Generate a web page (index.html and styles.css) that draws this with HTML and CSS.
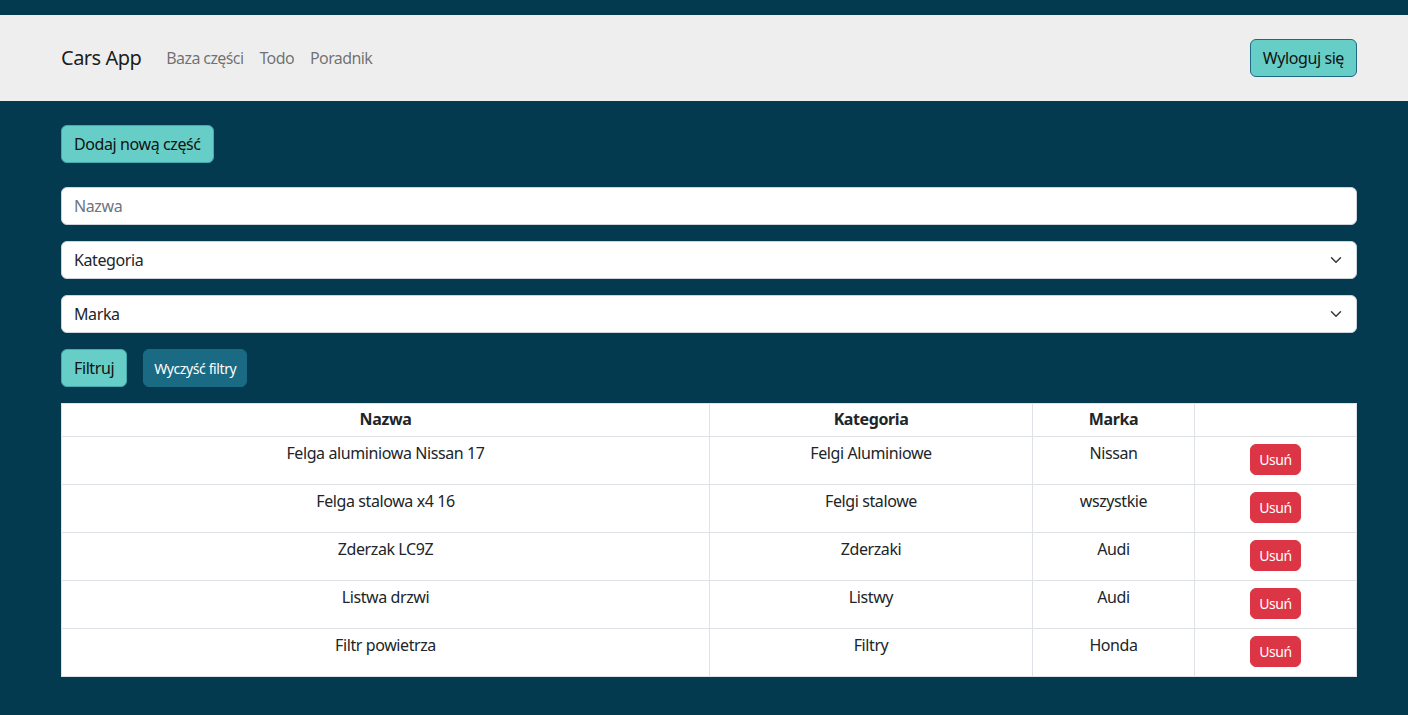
FILE: index.html
```html
<!DOCTYPE html>
<html lang="pl">
<head>
<meta charset="utf-8">
<title>Cars App</title>
<link rel="stylesheet" href="styles.css">
</head>
<body>
<div class="topband"></div>
<nav class="navbar">
  <div class="container nav-inner">
    <a class="brand" href="#">Cars App</a>
    <ul class="nav-links">
      <li><a href="#">Baza części</a></li>
      <li><a href="#">Todo</a></li>
      <li><a href="#">Poradnik</a></li>
    </ul>
    <button class="btn btn-teal btn-logout">Wyloguj się</button>
  </div>
</nav>
<main class="container main">
  <div class="row-add"><button class="btn btn-teal">Dodaj nową część</button></div>
  <input class="field" type="text" placeholder="Nazwa">
  <div class="select field"><span>Kategoria</span>
    <svg class="chev" width="12" height="12" viewBox="0 0 16 16"><path d="M2 5l6 6 6-6" fill="none" stroke="#343a40" stroke-width="2" stroke-linecap="round" stroke-linejoin="round"/></svg>
  </div>
  <div class="select field"><span>Marka</span>
    <svg class="chev" width="12" height="12" viewBox="0 0 16 16"><path d="M2 5l6 6 6-6" fill="none" stroke="#343a40" stroke-width="2" stroke-linecap="round" stroke-linejoin="round"/></svg>
  </div>
  <div class="filter-buttons">
    <button class="btn btn-teal">Filtruj</button>
    <button class="btn btn-dark-teal">Wyczyść filtry</button>
  </div>
  <table class="parts">
    <colgroup>
      <col style="width:648px"><col style="width:323px"><col style="width:162px"><col style="width:162px">
    </colgroup>
    <thead>
      <tr><th>Nazwa</th><th>Kategoria</th><th>Marka</th><th></th></tr>
    </thead>
    <tbody>
      <tr><td>Felga aluminiowa Nissan 17</td><td>Felgi Aluminiowe</td><td>Nissan</td><td><button class="btn btn-red">Usuń</button></td></tr>
      <tr><td>Felga stalowa x4 16</td><td>Felgi stalowe</td><td>wszystkie</td><td><button class="btn btn-red">Usuń</button></td></tr>
      <tr><td>Zderzak LC9Z</td><td>Zderzaki</td><td>Audi</td><td><button class="btn btn-red">Usuń</button></td></tr>
      <tr><td>Listwa drzwi</td><td>Listwy</td><td>Audi</td><td><button class="btn btn-red">Usuń</button></td></tr>
      <tr><td>Filtr powietrza</td><td>Filtry</td><td>Honda</td><td><button class="btn btn-red">Usuń</button></td></tr>
    </tbody>
  </table>
</main>
</body>
</html>
```
FILE: styles.css
```css
* { box-sizing: border-box; }
html, body { margin: 0; padding: 0; }
body {
  background: #043a4f;
  font-family: "Noto Sans", "Open Sans", sans-serif;
  font-size: 16px;
  line-height: 1.5;
  color: #212529;
  min-height: 715px;
}
.topband { height: 15px; }
.container {
  width: 1296px;
  margin-left: 61px;
}
.navbar { background: #eeeeee; height: 86px; }
.nav-inner {
  display: flex;
  align-items: center;
  height: 86px;
}
.brand {
  font-size: 20px;
  color: rgba(0,0,0,0.9);
  text-decoration: none;
  margin-right: 17px;
  letter-spacing: -0.5px;
}
.nav-links {
  list-style: none;
  margin: 0;
  padding: 0;
  display: flex;
}
.nav-links a {
  display: block;
  padding: 8px 8px;
  color: rgba(0,0,0,0.55);
  text-decoration: none;
  letter-spacing: -0.6px;
}
.btn {
  font-family: inherit;
  font-size: 16px;
  line-height: 1.5;
  border-radius: 6px;
  padding: 6px 12px;
  border: 1px solid transparent;
  cursor: pointer;
  letter-spacing: -0.4px;
}
.btn-teal {
  background: #66cec6;
  color: #111;
  border-color: #47aab0;
}
.btn-logout {
  margin-left: auto;
  border-color: #1d6a83;
}
.main { padding-top: 24px; }
.row-add { margin-bottom: 24px; }
.row-add .btn { height: 38px; }
.field {
  display: flex;
  align-items: center;
  width: 100%;
  height: 38px;
  background: #fff;
  border: 1px solid #ced4da;
  border-radius: 6px;
  padding: 6px 12px;
  font-family: inherit;
  font-size: 16px;
  color: #212529;
  margin-bottom: 16px;
  letter-spacing: -0.4px;
}
.field::placeholder { color: #6c757d; }
.select { justify-content: space-between; padding-right: 14px; }
.filter-buttons {
  display: flex;
  gap: 16px;
  margin-bottom: 16px;
}
.filter-buttons .btn { height: 38px; }
.btn-dark-teal {
  background: #1b6a84;
  color: #fff;
  font-size: 14px;
  border-color: #1b6a84;
  padding: 6px 10px;
}
.parts {
  width: 1295px;
  border-collapse: collapse;
  background: #fff;
  table-layout: fixed;
  text-align: center;
  letter-spacing: -0.4px;
}
.parts th, .parts td {
  border: 1px solid #dee2e6;
  padding: 4px 8px;
  vertical-align: top;
}
.parts th { font-weight: 700; height: 33px; padding-top: 3px; }
.parts td { height: 48px; padding-top: 4px; }
.btn-red {
  background: #dc3545;
  color: #fff;
  font-size: 14px;
  padding: 4px 8px;
  border-radius: 6px;
  border-color: #dc3545;
  margin-top: 3px;
  line-height: 1.5;
}
```
